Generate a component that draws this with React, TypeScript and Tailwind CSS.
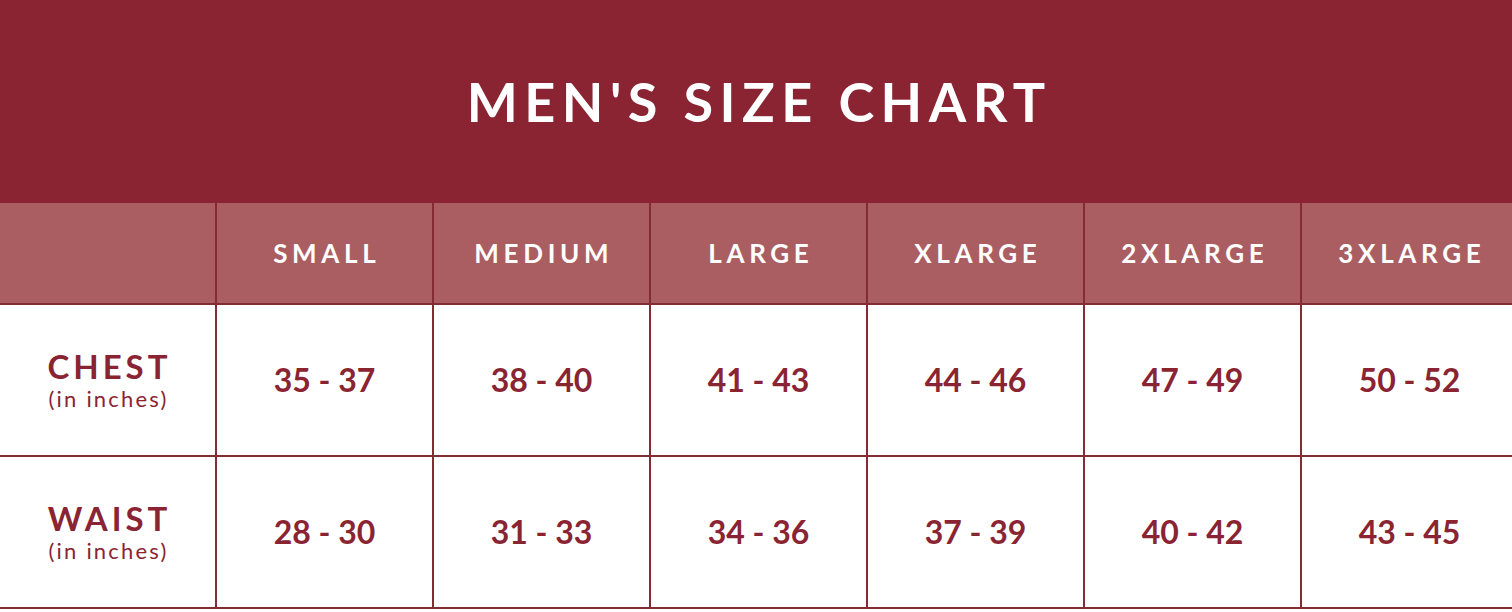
import { Fragment } from "react";

const sizes = ["SMALL", "MEDIUM", "LARGE", "XLARGE", "2XLARGE", "3XLARGE"];

const rows = [
  { label: "CHEST", values: ["35 - 37", "38 - 40", "41 - 43", "44 - 46", "47 - 49", "50 - 52"] },
  { label: "WAIST", values: ["28 - 30", "31 - 33", "34 - 36", "37 - 39", "40 - 42", "43 - 45"] },
];

export default function App() {
  return (
    <div className="w-[1512px] h-[612px] overflow-hidden bg-white font-['Lato',sans-serif]">
      {/* Title band */}
      <div className="h-[203px] bg-[#8a2433] flex items-center justify-center">
        <h1 className="text-white font-bold text-[54px] tracking-[0.12em] leading-none pl-[0.12em]">
          MEN'S SIZE CHART
        </h1>
      </div>

      {/* Table */}
      <div className="grid grid-cols-[215px_repeat(6,215px)] grid-rows-[100px_150px_150px] gap-[2px] bg-[#852b34] pb-[2px] w-[1517px]">
        <div className="bg-[#ab5e62]" />
        {sizes.map((s) => (
          <div key={s} className="bg-[#ab5e62] flex items-center justify-center">
            <span className="text-white font-bold text-[26px] tracking-[0.18em] pl-[0.18em]">{s}</span>
          </div>
        ))}
        {rows.map((row) => (
          <Fragment key={row.label}>
            <div className="bg-white flex flex-col items-center justify-center text-[#8a2433]">
              <span className="font-bold text-[33px] leading-none tracking-[0.12em] pl-[0.12em]">{row.label}</span>
              <span className="text-[22px] leading-none mt-[5px] tracking-[0.1em] pl-[0.1em]">(in inches)</span>
            </div>
            {row.values.map((v) => (
              <div key={v} className="bg-white flex items-center justify-center">
                <span className="text-[#8a2433] font-bold text-[32px] leading-none">{v}</span>
              </div>
            ))}
          </Fragment>
        ))}
      </div>
    </div>
  );
}
